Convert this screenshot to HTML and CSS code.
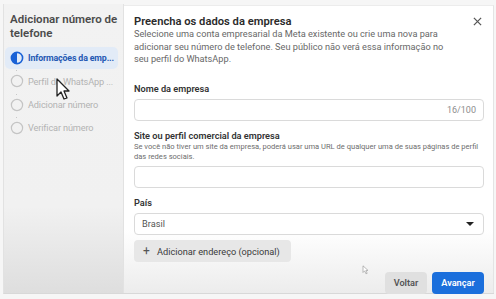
FILE: index.html
```html
<!DOCTYPE html>
<html lang="pt-BR">
<head>
  <meta charset="UTF-8">
  <meta name="viewport" content="width=device-width, initial-scale=1.0">
  <title>Adicionar número de telefone</title>
  <link rel="stylesheet" href="styles.css">
</head>
<body>
  <div class="dialog">
    <aside class="sidebar">
      <h2>Adicionar número de telefone</h2>
      <ul class="steps">
        <li class="step active">
          <svg class="dot" viewBox="0 0 14 14" width="14" height="14"><circle cx="7" cy="7" r="5.6" fill="none" stroke="#1a62d6" stroke-width="1.6"/><path d="M7 1.4 A5.6 5.6 0 0 0 7 12.6 Z" fill="#1a62d6"/></svg>
          <span>Informações da emp...</span>
        </li>
        <li class="step">
          <svg class="dot" viewBox="0 0 14 14" width="14" height="14"><circle cx="7" cy="7" r="5.6" fill="none" stroke="#c4c4c4" stroke-width="1.2"/></svg>
          <span>Perfil do WhatsApp ...</span>
        </li>
        <li class="step">
          <svg class="dot" viewBox="0 0 14 14" width="14" height="14"><circle cx="7" cy="7" r="5.6" fill="none" stroke="#c4c4c4" stroke-width="1.2"/></svg>
          <span>Adicionar número</span>
        </li>
        <li class="step">
          <svg class="dot" viewBox="0 0 14 14" width="14" height="14"><circle cx="7" cy="7" r="5.6" fill="none" stroke="#c4c4c4" stroke-width="1.2"/></svg>
          <span>Verificar número</span>
        </li>
      </ul>
      <svg class="cursor" viewBox="0 0 16 24" width="16" height="24"><path d="M1 1 L1 18 L5 14 L8 21 L11 20 L8 13 L13 13 Z" fill="#fff" stroke="#222" stroke-width="1.3" stroke-linejoin="round"/></svg>
    </aside>

    <main class="panel">
      <header class="head">
        <h1>Preencha os dados da empresa</h1>
        <button class="close" aria-label="Fechar">
          <svg viewBox="0 0 10 10" width="9" height="9"><path d="M1 1 L9 9 M9 1 L1 9" stroke="#555" stroke-width="1.4"/></svg>
        </button>
      </header>
      <p class="intro">Selecione uma conta empresarial da Meta existente ou crie uma nova para adicionar seu número de telefone. Seu público não verá essa informação no seu perfil do WhatsApp.</p>

      <div class="field first">
        <label>Nome da empresa</label>
        <div class="input"><span class="count">16/100</span></div>
      </div>

      <div class="field">
        <label>Site ou perfil comercial da empresa</label>
        <p class="help">Se você não tiver um site da empresa, poderá usar uma URL de qualquer uma de suas páginas de perfil das redes sociais.</p>
        <div class="input"></div>
      </div>

      <div class="field">
        <label>País</label>
        <div class="input select"><span>Brasil</span><span class="caret"></span></div>
      </div>

      <button class="add"><span class="plus">+</span> Adicionar endereço (opcional)</button>

      <footer class="actions">
        <svg class="mini-cursor" viewBox="0 0 8 12" width="7" height="10"><path d="M1 1 L1 9 L3 7 L4.5 10.5 L6 10 L4.5 6.5 L7 6.5 Z" fill="#fff" stroke="#999" stroke-width="0.8"/></svg>
        <button class="btn back">Voltar</button>
        <button class="btn next">Avançar</button>
      </footer>
    </main>
  </div>
</body>
</html>
```

FILE: styles.css
```css
body { margin: 0; background: #f6f6f6; font-family: Roboto, "Liberation Sans", Arial, sans-serif; color: #1c1e21; }
.dialog { display: flex; margin: 4px 2px 0 3px; height: 289px; border-left: 1px solid #e2e2e2; border-bottom: 1px solid #d8d8d8; }

.sidebar { position: relative; width: 120px; flex: none; background: linear-gradient(#f2f2f2 0%, #f1f1f1 70%, #dedede 100%); border-right: 1px solid #e2e2e2; padding: 8px 0 0 0; box-sizing: border-box; }
.sidebar h2 { margin: 0 0 0 6px; font-size: 11.5px; line-height: 14px; font-weight: 600; color: #4b4b4b; }
.steps { list-style: none; margin: 7px 0 0 1px; padding: 0; }
.step { position: relative; display: flex; align-items: center; gap: 4px; height: 22px; margin-bottom: 1.3px; padding-left: 5px; width: 113px; box-sizing: border-box; font-size: 9.2px; color: #b3b3b3; white-space: nowrap; overflow: hidden; }
.step span { letter-spacing: -0.15px; }
.step.active { background: #e2ebf7; border-radius: 5px; color: #2458b3; font-weight: 700; font-size: 8.8px; }
.step + .step::before { content: ""; position: absolute; left: 11px; top: -6px; height: 7px; border-left: 1px dotted #c8c8c8; }
.dot { flex: none; }
.cursor { position: absolute; left: 52px; top: 74px; }

.panel { flex: 1; margin-top: 1px; background: linear-gradient(#fff 0%, #fff 78%, #ececec 100%); border-top: 1px solid #ececec; border-right: 1px solid #e4e4e4; padding: 9px 9px 0 10px; box-sizing: border-box; display: flex; flex-direction: column; }
.head { display: flex; justify-content: space-between; align-items: center; }
.head h1 { margin: 0; font-size: 11.2px; font-weight: 600; color: #2a2a2a; line-height: 13px; }
.close { border: none; background: none; padding: 0; margin-right: 2px; cursor: pointer; display: flex; }
.intro { margin: 0; font-size: 9.2px; line-height: 12.5px; color: #686868; width: 324px; }

.field { margin-top: 9px; flex: none; }
.field.first { margin-top: 17px; }
.field label { display: block; font-size: 9.2px; font-weight: 600; color: #333; line-height: 12px; margin-bottom: 4px; }
.help { margin: -4px 0 3px; font-size: 7.55px; line-height: 10.5px; color: #6d6d6d; }
.input { height: 22px; border: 1px solid #dadada; border-radius: 4px; background: #fff; display: flex; align-items: center; justify-content: flex-end; padding: 0 7px; box-sizing: border-box; }
.count { font-size: 9px; color: #8d8d8d; }
.select { justify-content: space-between; font-size: 9.2px; color: #555; }
.caret { width: 0; height: 0; border-left: 4px solid transparent; border-right: 4px solid transparent; border-top: 4px solid #222; margin-right: 2px; }

.add { align-self: flex-start; flex: none; margin-top: 5px; height: 22px; padding: 0 11px 0 9px; border: none; border-radius: 4px; background: #e7e7e7; font-family: inherit; font-size: 9.2px; color: #3a3a3a; cursor: pointer; }
.add .plus { font-size: 12px; margin-right: 5px; color: #555; }

.actions { position: relative; display: flex; justify-content: flex-end; gap: 5px; margin-top: 10px; flex: none; }
.mini-cursor { position: absolute; left: 228px; top: -7px; }
.btn { height: 22px; border: none; border-radius: 4px; font-family: inherit; font-size: 9.2px; font-weight: 600; cursor: pointer; }
.back { width: 42px; background: #e0e0e0; color: #555; }
.next { width: 52px; background: #1b6fdc; color: #fff; }
```
